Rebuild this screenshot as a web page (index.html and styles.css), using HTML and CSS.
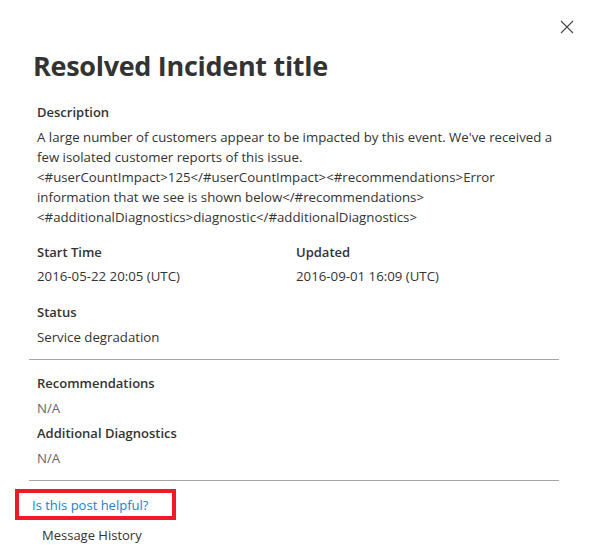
FILE: index.html
```html
<!DOCTYPE html>
<html>
<head>
<meta charset="utf-8">
<link rel="stylesheet" href="styles.css">
</head>
<body>
<div class="panel">
  <div class="topbar">
    <button class="close" aria-label="Close">
      <svg width="14" height="14" viewBox="0 0 14 14"><path d="M1 1 L13 13 M13 1 L1 13" stroke="#444" stroke-width="1.1" fill="none"/></svg>
    </button>
  </div>
  <h1 class="title">Resolved Incident title</h1>
  <div class="body">
    <div class="field desc">
      <div class="label">Description</div>
      <div class="value">A large number of customers appear to be impacted by this event. We've received a few isolated customer reports of this issue. &lt;#userCountImpact&gt;125&lt;/#userCountImpact&gt;&lt;#recommendations&gt;Error information that we see is shown below&lt;/#recommendations&gt; &lt;#additionalDiagnostics&gt;diagnostic&lt;/#additionalDiagnostics&gt;</div>
    </div>
    <div class="row">
      <div class="field col">
        <div class="label">Start Time</div>
        <div class="value">2016-05-22 20:05 (UTC)</div>
      </div>
      <div class="field col">
        <div class="label">Updated</div>
        <div class="value">2016-09-01 16:09 (UTC)</div>
      </div>
    </div>
    <div class="field status">
      <div class="label">Status</div>
      <div class="value">Service degradation</div>
    </div>
  </div>
  <hr class="sep">
  <div class="body body2">
    <div class="field">
      <div class="label">Recommendations</div>
      <div class="value muted">N/A</div>
    </div>
    <div class="field">
      <div class="label">Additional Diagnostics</div>
      <div class="value muted">N/A</div>
    </div>
  </div>
  <hr class="sep sep2">
  <div class="helpful-box">
    <a class="helpful" href="#">Is this post helpful?</a>
  </div>
  <div class="history">Message History</div>
</div>
</body>
</html>
```
FILE: styles.css
```css
html, body {
  margin: 0;
  padding: 0;
  background: #fff;
}
body {
  font-family: "Open Sans", "Noto Sans", sans-serif;
  color: #333;
  width: 589px;
  height: 557px;
  overflow: hidden;
}
.panel {
  padding: 0 30px 0 29px;
}
.topbar {
  display: flex;
  justify-content: flex-end;
  height: 48px;
}
.close {
  background: none;
  border: 0;
  padding: 0;
  margin: 20px -15px 0 0;
  width: 14px;
  height: 14px;
  display: flex;
}
.title {
  margin: 0 0 18px 4px;
  font-size: 27px;
  font-weight: 700;
  color: #333;
  line-height: 36px;
  letter-spacing: -0.3px;
}
.body {
  padding: 0 0 0 8px;
  font-size: 13.25px;
}
.body > .field + .row {
  margin-top: 15px;
}
.body > .row + .field {
  margin-top: 16px;
}
.label {
  font-weight: 600;
  font-size: 13px;
  color: #333;
  line-height: 20px;
}
.value {
  line-height: 20px;
  color: #333;
  margin-top: 4px;
}
.desc .value,
.status .value,
.body2 .value {
  margin-top: 5px;
}
.row {
  display: flex;
}
.col {
  width: 259px;
}
.sep {
  border: 0;
  border-top: 1px solid #a6a6a6;
  margin: 12px 0 13px;
}
.body2 .field + .field {
  margin-top: 5px;
}
.muted {
  color: #666;
}
.sep2 {
  margin: 12px 0 8px;
}
.helpful-box {
  margin-left: -14px;
  width: 140px;
  height: 23px;
  border: 4px solid #ed1c24;
  padding-left: 13px;
  display: flex;
  align-items: center;
}
.helpful {
  color: #1a7fd0;
  text-decoration: none;
  font-size: 13px;
}
.history {
  margin: 5px 0 0 13px;
  font-size: 13px;
  color: #333;
  line-height: 20px;
}
```
